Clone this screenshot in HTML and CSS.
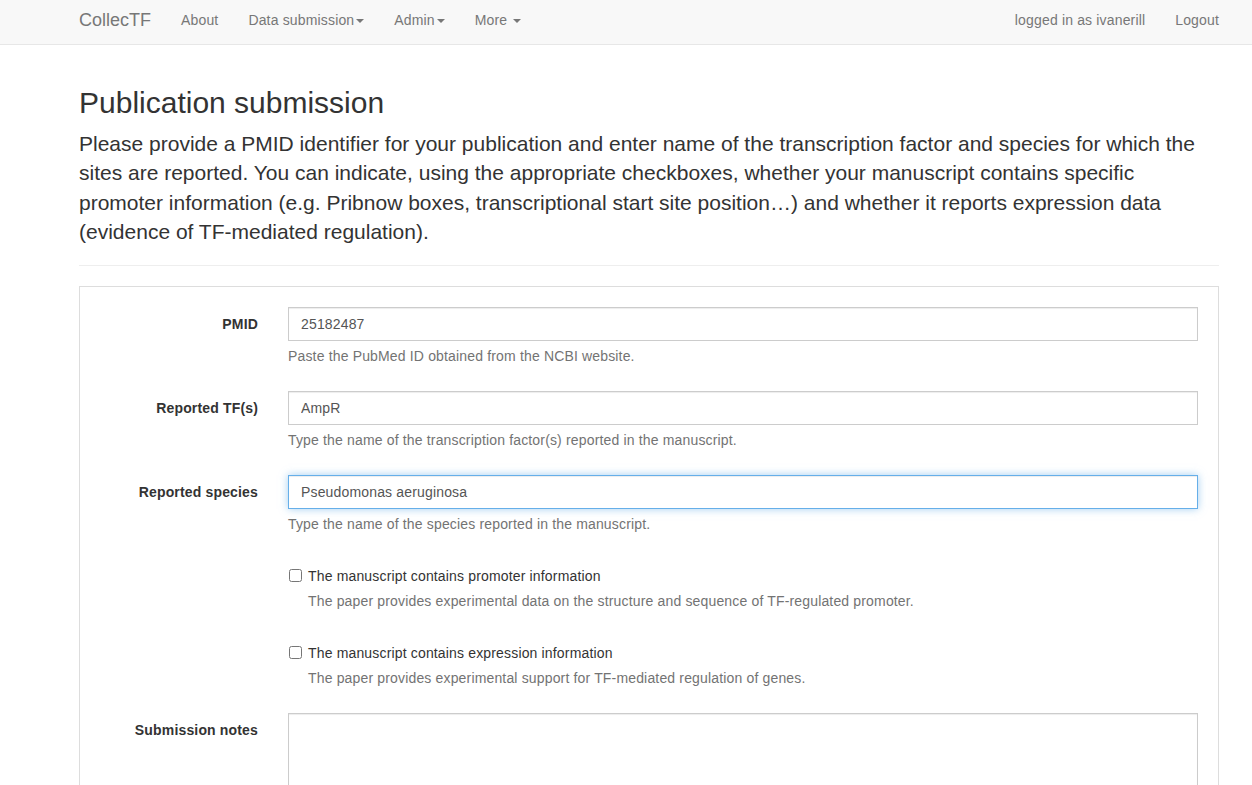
FILE: index.html
```html
<!DOCTYPE html>
<html lang="en">
<head>
<meta charset="utf-8">
<title>CollecTF - Publication submission</title>
<link rel="stylesheet" href="styles.css">
</head>
<body>
<nav class="navbar">
  <div class="container nav-inner">
    <a class="brand" href="#">CollecTF</a>
    <ul class="nav">
      <li><a href="#">About</a></li>
      <li><a href="#">Data submission<span class="caret"></span></a></li>
      <li><a href="#">Admin<span class="caret"></span></a></li>
      <li><a href="#">More <span class="caret"></span></a></li>
    </ul>
    <ul class="nav nav-right">
      <li><a href="#">logged in as ivanerill</a></li>
      <li><a href="#">Logout</a></li>
    </ul>
  </div>
</nav>

<main class="container">
  <h2 class="title">Publication submission</h2>
  <p class="lead">Please provide a PMID identifier for your publication and enter name of the transcription factor and species for which the sites are reported. You can indicate, using the appropriate checkboxes, whether your manuscript contains specific promoter information (e.g. Pribnow boxes, transcriptional start site position…) and whether it reports expression data (evidence of TF-mediated regulation).</p>
  <hr class="divider">

  <form class="form-box">
    <div class="form-group">
      <label class="control-label" for="pmid">PMID</label>
      <div class="field">
        <input class="form-control" id="pmid" type="text" value="25182487">
        <p class="help-block">Paste the PubMed ID obtained from the NCBI website.</p>
      </div>
    </div>
    <div class="form-group">
      <label class="control-label" for="tf">Reported TF(s)</label>
      <div class="field">
        <input class="form-control" id="tf" type="text" value="AmpR">
        <p class="help-block">Type the name of the transcription factor(s) reported in the manuscript.</p>
      </div>
    </div>
    <div class="form-group">
      <label class="control-label" for="species">Reported species</label>
      <div class="field">
        <input class="form-control focused" id="species" type="text" value="Pseudomonas aeruginosa">
        <p class="help-block">Type the name of the species reported in the manuscript.</p>
      </div>
    </div>
    <div class="form-group">
      <div class="field field-offset">
        <div class="checkbox">
          <label><input type="checkbox">The manuscript contains promoter information</label>
          <p class="help-block">The paper provides experimental data on the structure and sequence of TF-regulated promoter.</p>
        </div>
      </div>
    </div>
    <div class="form-group">
      <div class="field field-offset">
        <div class="checkbox">
          <label><input type="checkbox">The manuscript contains expression information</label>
          <p class="help-block">The paper provides experimental support for TF-mediated regulation of genes.</p>
        </div>
      </div>
    </div>
    <div class="form-group">
      <label class="control-label" for="notes">Submission notes</label>
      <div class="field">
        <textarea class="form-control textarea" id="notes"></textarea>
      </div>
    </div>
  </form>
</main>
</body>
</html>
```

FILE: styles.css
```css
* {
  box-sizing: border-box;
}

html, body {
  margin: 0;
  padding: 0;
}

body {
  font-family: "Liberation Sans", Arial, Helvetica, sans-serif;
  font-size: 14px;
  line-height: 1.428571;
  letter-spacing: 0.16px;
  color: #333;
  background: #fff;
}

.container {
  width: 1170px;
  margin-left: 64px;
  padding: 0 15px;
}

/* Navbar */
.navbar {
  background: #f8f8f8;
  border-bottom: 1px solid #e7e7e7;
  height: 45px;
}

.nav-inner {
  display: flex;
  align-items: flex-start;
  height: 44px;
}

.brand {
  font-size: 18px;
  line-height: 20px;
  letter-spacing: 0;
  color: #777;
  text-decoration: none;
  padding: 10px 15px 14px 0;
}

.nav {
  display: flex;
  list-style: none;
  margin: 0;
  padding: 0;
}

.nav a {
  display: block;
  padding: 10px 15px 14px;
  line-height: 20px;
  color: #777;
  text-decoration: none;
}

.nav-right {
  margin-left: auto;
  margin-right: -15px;
}

.caret {
  display: inline-block;
  width: 0;
  height: 0;
  margin-left: 2px;
  vertical-align: middle;
  border-top: 4px solid #777;
  border-left: 4px solid transparent;
  border-right: 4px solid transparent;
}

/* Header */
.title {
  font-size: 30px;
  font-weight: 500;
  line-height: 1.1;
  letter-spacing: 0;
  margin: 41px 0 10px;
  color: #333;
}

.lead {
  font-size: 21px;
  font-weight: 300;
  line-height: 1.4;
  letter-spacing: 0;
  margin: 0 0 18px;
}

.divider {
  border: 0;
  border-top: 1px solid #eee;
  margin: 18px 0 20px;
  height: 0;
}

/* Form box */
.form-box {
  border: 1px solid #ddd;
  background: #fff;
  padding: 20px 20px 19px 19px;
}

.form-group {
  display: grid;
  grid-template-columns: 159px 1fr;
  column-gap: 30px;
  margin-bottom: 15px;
}

.control-label {
  text-align: right;
  font-weight: bold;
  padding-top: 7px;
  line-height: 20px;
}

.field-offset {
  grid-column: 2;
}

.form-control {
  display: block;
  width: 100%;
  height: 34px;
  padding: 6px 12px;
  font-family: inherit;
  font-size: 14px;
  line-height: 20px;
  letter-spacing: 0.16px;
  color: #555;
  background: #fff;
  border: 1px solid #ccc;
  border-radius: 0;
  box-shadow: inset 0 1px 1px rgba(0, 0, 0, 0.075);
  margin: 0;
}

.form-control.focused {
  border-color: #66afe9;
  box-shadow: inset 0 1px 1px rgba(0, 0, 0, 0.075), 0 0 8px rgba(102, 175, 233, 0.6);
}

.textarea {
  height: 110px;
  resize: vertical;
}

.help-block {
  display: block;
  margin: 5px 0 10px;
  color: #737373;
  line-height: 20px;
}

.checkbox {
  padding-top: 7px;
  min-height: 27px;
  padding-left: 20px;
}

.checkbox label {
  display: block;
  line-height: 20px;
  font-weight: normal;
  position: relative;
}

.checkbox input {
  position: absolute;
  left: -19px;
  top: 3px;
  width: 13px;
  height: 13px;
  margin: 0;
}
```
